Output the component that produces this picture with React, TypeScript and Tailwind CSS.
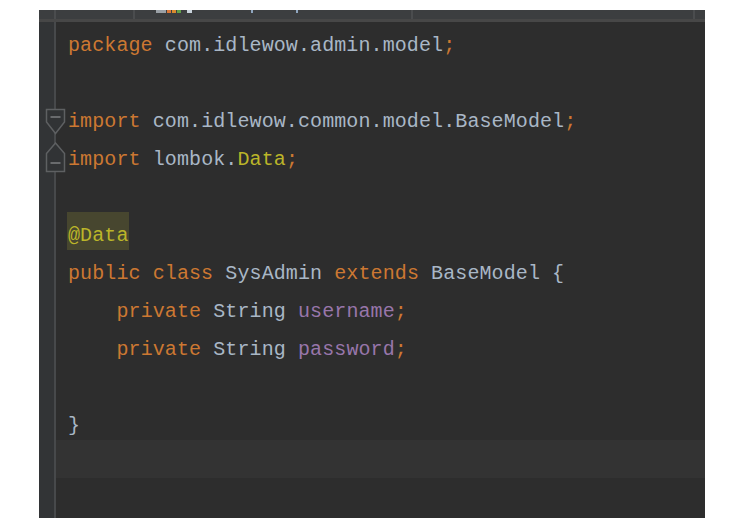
import type { ReactNode } from "react";

// TOKENS **************************************************************************************************************************
type Tok = { t: string; c?: string; box?: boolean };

const KW = "text-[#cc7832]";
const PLAIN = "text-[#a9b7c6]";
const ANNO = "text-[#bbb529]";
const FIELD = "text-[#9876aa]";

const lines: Tok[][] = [
  [{ t: "package", c: KW }, { t: " com.idlewow.admin.model" }, { t: ";", c: KW }],
  [],
  [{ t: "import", c: KW }, { t: " com.idlewow.common.model.BaseModel" }, { t: ";", c: KW }],
  [{ t: "import", c: KW }, { t: " lombok." }, { t: "Data", c: ANNO }, { t: ";", c: KW }],
  [],
  [{ t: "@Data", c: ANNO, box: true }],
  [
    { t: "public class", c: KW },
    { t: " SysAdmin " },
    { t: "extends", c: KW },
    { t: " BaseModel {" },
  ],
  [{ t: "    " }, { t: "private", c: KW }, { t: " String " }, { t: "username", c: FIELD }, { t: ";", c: KW }],
  [{ t: "    " }, { t: "private", c: KW }, { t: " String " }, { t: "password", c: FIELD }, { t: ";", c: KW }],
  [],
  [{ t: "}" }],
  [],
  [],
];

// fold markers sit on the gutter line, over the import block
function FoldStart() {
  return (
    <svg width="21" height="27" viewBox="0 0 21 27" className="absolute left-[6px] top-[86px]">
      <path d="M1.5 1.5 H19.5 V14 L10.5 25.5 L1.5 14 Z" fill="#313335" stroke="#5e6062" strokeWidth="1.5" />
      <path d="M5.5 9 H15.5" stroke="#7d7f81" strokeWidth="1.5" />
    </svg>
  );
}

function FoldEnd() {
  return (
    <svg width="21" height="31" viewBox="0 0 21 31" className="absolute left-[6px] top-[120px]">
      <path d="M10.5 1 L19.5 11.5 V29.5 H1.5 V11.5 Z" fill="#313335" stroke="#5e6062" strokeWidth="1.5" />
      <path d="M5.5 21 H15.5" stroke="#7d7f81" strokeWidth="1.5" />
    </svg>
  );
}

function Line({ toks, current }: { toks: Tok[]; current?: boolean }): ReactNode {
  return (
    <div className={`flex h-[38px] whitespace-pre pl-[12px] ${current ? "bg-[#333333]" : ""}`}>
      {toks.map((tk, i) => (
        <span
          key={i}
          className={`pt-[10px] leading-[28px] ${tk.c ?? PLAIN} ${tk.box ? "-ml-px pl-px bg-[#47462f]" : ""}`}
        >
          {tk.t}
        </span>
      ))}
    </div>
  );
}

export default function App() {
  return (
    <div className="h-[532px] w-[735px] bg-white pl-[39px] pt-[10px]">
      <div className="flex h-[508px] w-[666px] flex-col overflow-hidden bg-[#2d2d2d]">
        {/* tab strip, cut off at the top */}
        <div className="relative flex h-[12px] shrink-0 border-b-[3px] border-[#474747] bg-[#3c3e40]">
          <div className="w-[15px] shrink-0" />
          <div className="w-[2px] shrink-0 bg-[#4a4c4e]" />
          <div className="w-[77px] shrink-0" />
          <div className="w-[2px] shrink-0 bg-[#4a4c4e]" />
          <div className="flex w-[276px] shrink-0 items-start gap-[1px] pl-[21px]">
            <span className="h-[3px] w-[10px] bg-[#9aa0a6]" />
            <span className="h-[3px] w-[4px] bg-[#d9783a]" />
            <span className="h-[3px] w-[4px] bg-[#d98a2e]" />
            <span className="h-[3px] w-[4px] bg-[#62a04a]" />
            <span className="ml-[5px] h-[3px] w-[5px] bg-[#c9d3dc]" />
            <span className="ml-[58px] h-[3px] w-[2px] bg-[#8fa6c0]" />
            <span className="ml-[42px] h-[3px] w-[2px] bg-[#8fa6c0]" />
          </div>
          <div className="w-[2px] shrink-0 bg-[#4a4c4e]" />
          <div className="w-[280px] shrink-0" />
          <div className="w-[2px] shrink-0 bg-[#4a4c4e]" />
        </div>

        <div className="flex flex-1">
          {/* gutter */}
          <div className="relative w-[15px] shrink-0 bg-[#323436]">
            <FoldStart />
            <FoldEnd />
          </div>
          <div className="w-[2px] shrink-0 bg-[#47494b]" />

          {/* code */}
          <div className="flex-1 font-['Liberation_Mono',monospace] text-[20px] tracking-[0.1px]">
            {lines.map((toks, i) => (
              <Line key={i} toks={toks} current={i === 11} />
            ))}
          </div>
        </div>
      </div>
    </div>
  );
}
